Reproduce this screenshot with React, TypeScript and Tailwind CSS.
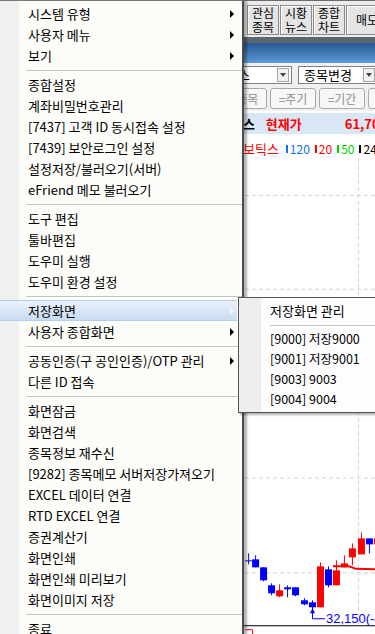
import React from 'react';

type Entry = { label: string; sub?: boolean; active?: boolean } | null;

const mainMenu: Entry[] = [
  { label: '시스템 유형', sub: true },
  { label: '사용자 메뉴', sub: true },
  { label: '보기', sub: true },
  null,
  { label: '종합설정' },
  { label: '계좌비밀번호관리' },
  { label: '[7437] 고객 ID 동시접속 설정' },
  { label: '[7439] 보안로그인 설정' },
  { label: '설정저장/불러오기(서버)' },
  { label: 'eFriend 메모 불러오기' },
  null,
  { label: '도구 편집' },
  { label: '툴바편집' },
  { label: '도우미 실행' },
  { label: '도우미 환경 설정' },
  null,
  { label: '저장화면', sub: true, active: true },
  { label: '사용자 종합화면', sub: true },
  null,
  { label: '공동인증(구 공인인증)/OTP 관리', sub: true },
  { label: '다른 ID 접속' },
  null,
  { label: '화면잠금' },
  { label: '화면검색' },
  { label: '종목정보 재수신' },
  { label: '[9282] 종목메모 서버저장가져오기' },
  { label: 'EXCEL 데이터 연결' },
  { label: 'RTD EXCEL 연결' },
  { label: '증권계산기' },
  { label: '화면인쇄' },
  { label: '화면인쇄 미리보기' },
  { label: '화면이미지 저장' },
  null,
  { label: '종료' },
];

const savedScreens = ['[9000] 저장9000', '[9001] 저장9001', '[9003] 9003', '[9004] 9004'];

// left x, body top, body bottom, wick top, wick bottom, colour
const candles: [number, number, number, number, number, 'r' | 'b'][] = [
  [252, 559, 567, 555, 567, 'b'],
  [260, 567, 580, 567, 581, 'b'],
  [268, 585, 593, 583, 595, 'b'],
  [276, 590, 596, 584, 597, 'r'],
  [284, 587, 589, 585, 597, 'b'],
  [292, 587, 595, 587, 596, 'b'],
  [301, 600, 604, 598, 605, 'b'],
  [309, 602, 607, 600, 610, 'b'],
  [317, 566, 607, 562, 607, 'r'],
  [325, 569, 585, 566, 587, 'b'],
  [333, 570, 585, 560, 585, 'r'],
  [341, 563, 567, 555, 567, 'r'],
  [349, 548, 557, 543, 565, 'r'],
  [358, 538, 554, 532, 554, 'r'],
  [366, 538, 544, 538, 553, 'b'],
  [374, 538, 544, 532, 548, 'r'],
];

function Arrow({ light }: { light?: boolean }) {
  return (
    <span
      className={`ml-auto mr-[3px] h-0 w-0 border-y-[4px] border-l-[4px] border-y-transparent ${
        light ? 'border-l-[#f4f8fd]' : 'border-l-black'
      }`}
    />
  );
}

function MenuRow({ label, sub, active }: { label: string; sub?: boolean; active?: boolean }) {
  return (
    <div
      className={`flex h-[21px] w-[237px] items-center ${
        active ? 'border-y border-[#b3cdec] bg-linear-to-b from-[#e9f2fc] to-[#c8dcf3]' : ''
      }`}
    >
      <span className="pl-[28px] text-[13px] leading-[21px] whitespace-nowrap text-black">{label}</span>
      {sub ? <Arrow light={active} /> : null}
    </div>
  );
}

function Sep({ left }: { left: string }) {
  return (
    <div className="h-[8px] pt-[4px]">
      <div className={`h-px bg-[#c5c5c5] ${left}`} />
    </div>
  );
}

function ToolButton({ top, bottom, w = 'w-[32px]' }: { top: string; bottom?: string; w?: string }) {
  return (
    <div
      className={`${w} flex h-[30px] flex-col items-center justify-center border border-[#8c8c8c] bg-[#e4e4e4] text-[12px] text-black shadow-[inset_1px_1px_0_#ffffff]`}
    >
      <span className="block h-[14px] leading-[14px]">{top}</span>
      {bottom ? <span className="block h-[14px] leading-[14px]">{bottom}</span> : null}
    </div>
  );
}

function DropButton() {
  return (
    <span className="mr-[2px] ml-auto flex h-[14px] w-[12px] shrink-0 items-center justify-center border border-[#a5a5a5] bg-[#f2f2f2]">
      <span className="h-0 w-0 border-x-[3px] border-t-[4px] border-x-transparent border-t-[#444]" />
    </span>
  );
}

function Chart() {
  const grid = [194, 288, 382, 477, 572];
  return (
    <svg width="240" height="476" viewBox="200 158 240 476" className="block">
      {grid.map((y) => (
        <line key={y} x1="245" x2="440" y1={y + 0.5} y2={y + 0.5} stroke="#d2d2d2" strokeDasharray="4 3" />
      ))}
      <line x1="358.5" x2="358.5" y1="158" y2="625" stroke="#d2d2d2" strokeDasharray="4 3" />
      <line x1="244" x2="440" y1="625.5" y2="625.5" stroke="#000" />
      <path d="M245 629.5H252.5V634" fill="none" stroke="#ff0000" />
      <line x1="245" x2="252" y1="560.5" y2="560.5" stroke="#0000ff" />
      <line x1="248.5" x2="248.5" y1="553" y2="564" stroke="#0000ff" />
      {candles.map(([x, top, bottom, wt, wb, c]) => {
        const col = c === 'r' ? '#ff0000' : '#0000ff';
        return (
          <g key={x}>
            <line x1={x + 3.5} x2={x + 3.5} y1={wt} y2={wb} stroke={col} />
            <rect x={x} y={top} width="7" height={Math.max(bottom - top, 1)} fill={col} />
          </g>
        );
      })}
      <polyline points="333,566 349,566 356,568.5 380,569" fill="none" stroke="#ff0000" strokeWidth="2" />
      <path d="M312.5 610V618.5H325" fill="none" stroke="#0000ff" />
      <path d="M310 613L312.5 608L315 613Z" fill="#0000ff" />
      <text x="326" y="623" fill="#0000ff" fontSize="13" fontFamily="Liberation Sans, sans-serif">
        32,150(-47.89%)
      </text>
    </svg>
  );
}

export default function App() {
  return (
    <div className="relative h-[634px] w-[375px] overflow-hidden bg-white font-['Noto_Sans_CJK_KR','Noto_Sans',sans-serif]">
      {/* application window behind the popup */}
      <div className="flex h-full">
        <div className="w-[200px] shrink-0" />
        <div className="flex w-[240px] shrink-0 flex-col">
          <div className="flex h-[37px] items-start gap-[1px] border-t border-[#6a6a6a] bg-[#ececec] pt-[4px] pl-[47px]">
            <ToolButton top="관심" bottom="종목" />
            <ToolButton top="시황" bottom="뉴스" />
            <ToolButton top="종합" bottom="차트" />
            <ToolButton top="매도" w="w-[42px]" />
          </div>
          <div className="h-[6px] bg-[#5c6670]" />
          <div className="h-[20px] bg-linear-to-b from-[#285994] to-[#5c9bd6]" />
          <div className="flex h-[24px] items-center gap-[6px] bg-[#f0f0f0] pl-[20px]">
            <div className="flex h-[18px] w-[72px] items-center border border-[#7f7f7f] bg-white">
              <span className="flex w-[29px] shrink-0 justify-end overflow-hidden text-[13px] leading-[16px] whitespace-nowrap text-black">
                레인보우로보틱스
              </span>
              <DropButton />
            </div>
            <div className="flex h-[18px] w-[80px] items-center border border-[#7f7f7f] bg-white">
              <span className="pl-[5px] text-[13px] leading-[16px] whitespace-nowrap text-black">종목변경</span>
              <DropButton />
            </div>
          </div>
          <div className="flex h-[24px] items-center gap-[3px] bg-[#f0f0f0] pl-[21px]">
            {['=종목', '=주기', '=기간', '=지표'].map((l) => (
              <div
                key={l}
                className="flex h-[21px] w-[46px] shrink-0 items-center justify-center rounded-[3px] border border-[#a9a9a9] bg-[#f7f7f7] text-[12px] text-[#8d8d8d]"
              >
                {l}
              </div>
            ))}
          </div>
          <div className="mt-[2px] flex h-[21px] items-center bg-[#d9e7f5] text-[13px] font-bold whitespace-nowrap">
            <span className="pl-[7px] text-black">로보틱스</span>
            <span className="ml-[11px] text-[#ff0000]">현재가</span>
            <span className="ml-[43px] text-[#ff0000]">61,700</span>
          </div>
          <div className="mt-[5px] flex h-[20px] items-center whitespace-nowrap">
            <span className="pl-[31px] text-[13px] text-[#ff0000]">로보틱스</span>
            <span className="ml-[7px] h-[8px] w-[2px] bg-[#0a74f0]" />
            <span className="ml-[2px] text-[12px] text-[#0a74f0]">120</span>
            <span className="ml-[5px] h-[8px] w-[2px] bg-[#ff0000]" />
            <span className="ml-[2px] text-[12px] text-[#ff0000]">20</span>
            <span className="ml-[5px] h-[8px] w-[2px] bg-[#00d000]" />
            <span className="ml-[2px] text-[12px] text-[#00d000]">50</span>
            <span className="ml-[5px] h-[8px] w-[2px] bg-black" />
            <span className="ml-[2px] text-[12px] text-black">240</span>
          </div>
          <Chart />
        </div>
      </div>

      {/* main popup menu */}
      <div className="absolute top-0 left-0 w-[244px] border-t border-r-2 border-t-[#7a7a7a] border-r-[#4b4b4b] bg-[linear-gradient(to_right,#f0f0f0_19px,#fcfcf8_19px)] pt-[2px] shadow-[3px_1px_2px_rgba(0,0,0,0.3)]">
        {mainMenu.map((e, i) =>
          e ? <MenuRow key={i} {...e} /> : <Sep key={i} left="ml-[26px]" />
        )}
      </div>

      {/* 저장화면 submenu */}
      <div className="absolute top-[297px] left-[238px] w-[160px] border border-[#555] bg-[linear-gradient(to_right,#eeeeee_22px,#fdfdfd_22px)] pt-[2px] pb-[3px] shadow-[2px_2px_2px_rgba(0,0,0,0.3)]">
        <div className="flex h-[21px] items-center pl-[31px] text-[13px] whitespace-nowrap text-black">저장화면 관리</div>
        <Sep left="ml-[31px]" />
        {savedScreens.map((s) => (
          <div key={s} className="flex h-[20px] items-center pl-[31px] text-[12.5px] whitespace-nowrap text-black">
            {s}
          </div>
        ))}
      </div>
    </div>
  );
}
